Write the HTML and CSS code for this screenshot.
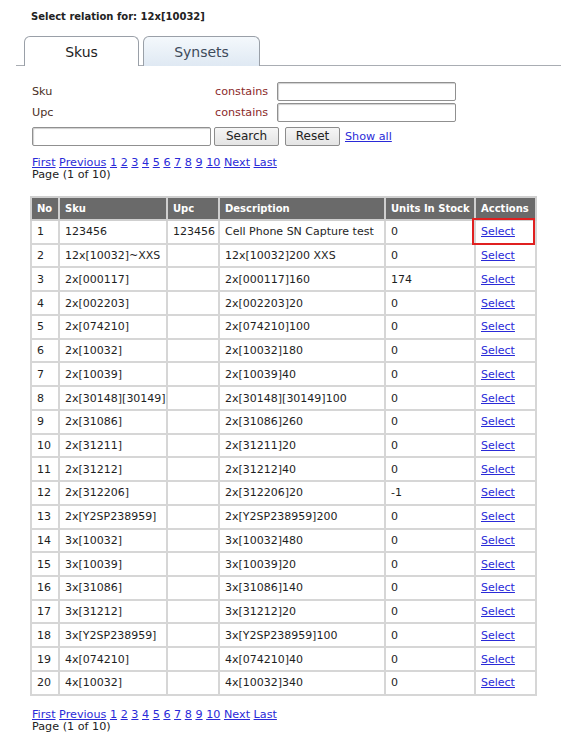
FILE: index.html
```html
<!DOCTYPE html>
<html>
<head>
<meta charset="utf-8">
<link rel="stylesheet" href="styles.css">
</head>
<body>
<div class="page">
  <div class="title">Select relation for: 12x[10032]</div>
  <div class="tabs">
    <div class="tab active">Skus</div>
    <div class="tab">Synsets</div>
  </div>
  <div class="content">
    <div class="frow">
      <span class="flabel">Sku</span>
      <span class="op">constains</span>
      <input class="txt" type="text">
    </div>
    <div class="frow">
      <span class="flabel">Upc</span>
      <span class="op">constains</span>
      <input class="txt" type="text">
    </div>
    <div class="frow actions-row">
      <input class="txt" type="text">
      <button class="btn btn-search">Search</button>
      <button class="btn btn-reset">Reset</button>
      <a href="#" class="link">Show all</a>
    </div>

    <div class="pager">
      <div class="pages"><a href="#">First</a> <a href="#">Previous</a> <a href="#">1</a> <a href="#">2</a> <a href="#">3</a> <a href="#">4</a> <a href="#">5</a> <a href="#">6</a> <a href="#">7</a> <a href="#">8</a> <a href="#">9</a> <a href="#">10</a> <a href="#">Next</a> <a href="#">Last</a></div>
      <div class="pinfo">Page (1 of 10)</div>
    </div>

    <table class="grid">
      <colgroup>
        <col class="c-no"><col class="c-sku"><col class="c-upc"><col class="c-desc"><col class="c-units"><col class="c-act">
      </colgroup>
      <thead>
        <tr><th>No</th><th>Sku</th><th>Upc</th><th>Description</th><th>Units In Stock</th><th>Acctions</th></tr>
      </thead>
      <tbody>
        <tr><td>1</td><td>123456</td><td>123456</td><td>Cell Phone SN Capture test</td><td>0</td><td class="hl"><a href="#">Select</a><span class="redbox"></span></td></tr>
        <tr><td>2</td><td>12x[10032]~XXS</td><td></td><td>12x[10032]200 XXS</td><td>0</td><td><a href="#">Select</a></td></tr>
        <tr><td>3</td><td>2x[000117]</td><td></td><td>2x[000117]160</td><td>174</td><td><a href="#">Select</a></td></tr>
        <tr><td>4</td><td>2x[002203]</td><td></td><td>2x[002203]20</td><td>0</td><td><a href="#">Select</a></td></tr>
        <tr><td>5</td><td>2x[074210]</td><td></td><td>2x[074210]100</td><td>0</td><td><a href="#">Select</a></td></tr>
        <tr><td>6</td><td>2x[10032]</td><td></td><td>2x[10032]180</td><td>0</td><td><a href="#">Select</a></td></tr>
        <tr><td>7</td><td>2x[10039]</td><td></td><td>2x[10039]40</td><td>0</td><td><a href="#">Select</a></td></tr>
        <tr><td>8</td><td>2x[30148][30149]</td><td></td><td>2x[30148][30149]100</td><td>0</td><td><a href="#">Select</a></td></tr>
        <tr><td>9</td><td>2x[31086]</td><td></td><td>2x[31086]260</td><td>0</td><td><a href="#">Select</a></td></tr>
        <tr><td>10</td><td>2x[31211]</td><td></td><td>2x[31211]20</td><td>0</td><td><a href="#">Select</a></td></tr>
        <tr><td>11</td><td>2x[31212]</td><td></td><td>2x[31212]40</td><td>0</td><td><a href="#">Select</a></td></tr>
        <tr><td>12</td><td>2x[312206]</td><td></td><td>2x[312206]20</td><td>-1</td><td><a href="#">Select</a></td></tr>
        <tr><td>13</td><td>2x[Y2SP238959]</td><td></td><td>2x[Y2SP238959]200</td><td>0</td><td><a href="#">Select</a></td></tr>
        <tr><td>14</td><td>3x[10032]</td><td></td><td>3x[10032]480</td><td>0</td><td><a href="#">Select</a></td></tr>
        <tr><td>15</td><td>3x[10039]</td><td></td><td>3x[10039]20</td><td>0</td><td><a href="#">Select</a></td></tr>
        <tr><td>16</td><td>3x[31086]</td><td></td><td>3x[31086]140</td><td>0</td><td><a href="#">Select</a></td></tr>
        <tr><td>17</td><td>3x[31212]</td><td></td><td>3x[31212]20</td><td>0</td><td><a href="#">Select</a></td></tr>
        <tr><td>18</td><td>3x[Y2SP238959]</td><td></td><td>3x[Y2SP238959]100</td><td>0</td><td><a href="#">Select</a></td></tr>
        <tr><td>19</td><td>4x[074210]</td><td></td><td>4x[074210]40</td><td>0</td><td><a href="#">Select</a></td></tr>
        <tr><td>20</td><td>4x[10032]</td><td></td><td>4x[10032]340</td><td>0</td><td><a href="#">Select</a></td></tr>
      </tbody>
    </table>

    <div class="pager pager-bottom">
      <div class="pages"><a href="#">First</a> <a href="#">Previous</a> <a href="#">1</a> <a href="#">2</a> <a href="#">3</a> <a href="#">4</a> <a href="#">5</a> <a href="#">6</a> <a href="#">7</a> <a href="#">8</a> <a href="#">9</a> <a href="#">10</a> <a href="#">Next</a> <a href="#">Last</a></div>
      <div class="pinfo">Page (1 of 10)</div>
    </div>
  </div>
</div>
</body>
</html>
```

FILE: styles.css
```css
html, body {
  margin: 0;
  padding: 0;
  background: #ffffff;
}
body {
  font-family: "DejaVu Sans", Verdana, sans-serif;
  font-size: 11.2px;
  color: #1e1e1e;
}
.page {
  width: 545px;
  margin-left: 16px;
  padding-top: 11px;
}
.title {
  margin-left: 15px;
  font-weight: bold;
  font-size: 10px;
  line-height: 12px;
  color: #222;
}
.tabs {
  display: flex;
  gap: 4px;
  padding-left: 8px;
  margin-top: 13px;
  height: 29px;
  border-bottom: 1px solid #a9adb3;
}
.tab {
  box-sizing: border-box;
  height: 30px;
  border: 1px solid #9aa0a8;
  border-bottom: none;
  border-radius: 6px 6px 0 0;
  font-size: 14px;
  line-height: 30px;
  text-align: center;
  color: #3d4a5a;
  background: linear-gradient(#f4f8fc, #dfe9f3);
  width: 117px;
}
.tab.active {
  width: 115px;
  background: #ffffff;
  color: #1e1e1e;
  position: relative;
  z-index: 1;
}
.content {
  padding-left: 16px;
  padding-top: 15px;
}
.frow {
  display: flex;
  align-items: center;
  height: 21px;
}
.flabel {
  width: 183px;
  color: #4a2e1e;
}
.op {
  color: #8b2a2a;
  width: 62px;
}
.txt {
  box-sizing: border-box;
  width: 179px;
  height: 19px;
  border: 1px solid #909090;
  border-radius: 2px;
  box-shadow: inset 1px 1px 1px #cfcfcf;
  margin: 0;
  padding: 0;
  font-size: 10px;
}
.actions-row {
  height: 22px;
  margin-top: 2px;
}
.btn {
  box-sizing: border-box;
  height: 19px;
  margin: 0 0 0 3px;
  padding: 0;
  border: 1px solid #8c8c8c;
  border-radius: 2px;
  background: linear-gradient(#f6f6f6, #e4e4e4);
  font-family: "DejaVu Sans", Verdana, sans-serif;
  font-size: 12px;
  color: #222;
}
.btn-search { width: 65px; }
.btn-reset { width: 55px; margin-left: 6px; }
.link {
  margin-left: 5px;
  color: #2a2ad8;
  text-decoration: underline;
}
a {
  color: #2a2ad8;
}
.pager {
  margin-top: 10px;
  line-height: 12px;
}
.pinfo {
  color: #222;
}
.grid {
  margin-top: 15px;
  margin-left: -2px;
  border-collapse: collapse;
  table-layout: fixed;
  border: 2px solid #d6d6d6;
  width: 505px;
}
.c-no { width: 28px; }
.c-sku { width: 108px; }
.c-upc { width: 52px; }
.c-desc { width: 166px; }
.c-units { width: 90px; }
.c-act { width: 61px; }
.grid th, .grid td {
  border: 2px solid #d6d6d6;
  text-align: left;
  padding: 0 0 0 5px;
  height: 21.74px;
  white-space: nowrap;
  overflow: visible;
}
.grid td {
  font-size: 11px;
}
.grid th {
  background: #6a6a6a;
  color: #ffffff;
  font-weight: bold;
  font-size: 10px;
  border-color: #cfcfcf;
  height: 21px;
}
.grid td.hl {
  position: relative;
}
.redbox {
  position: absolute;
  left: -4px;
  top: -3px;
  right: 0;
  bottom: -2px;
  border: 2px solid #e02020;
  pointer-events: none;
}
.pager-bottom {
  margin-top: 13px;
}
```
